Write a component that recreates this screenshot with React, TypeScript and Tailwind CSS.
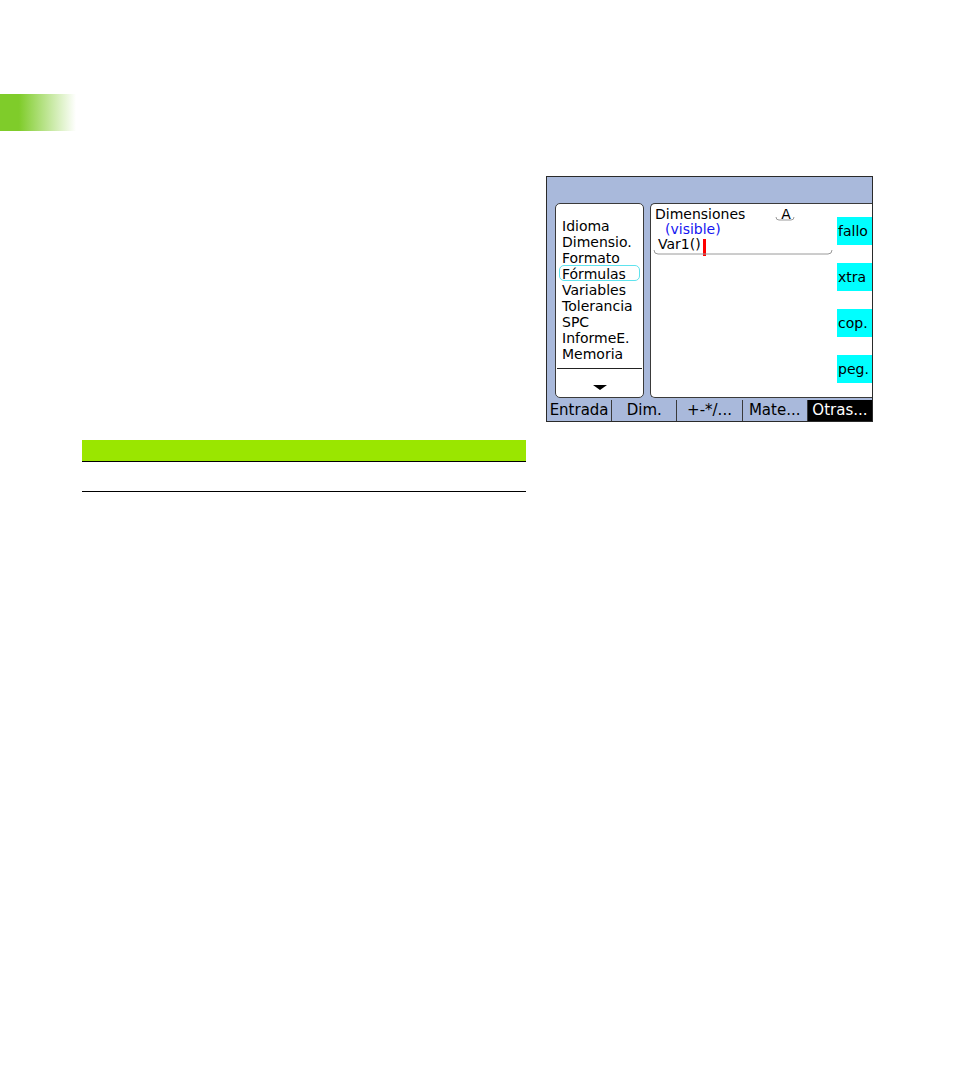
import React from "react";

const menuItems = [
  "Idioma",
  "Dimensio.",
  "Formato",
  "Fórmulas",
  "Variables",
  "Tolerancia",
  "SPC",
  "InformeE.",
  "Memoria",
];

const sideButtons = ["fallo", "xtra", "cop.", "peg."];

const tabs = ["Entrada", "Dim.", "+-*/...", "Mate...", "Otras..."];

function Screen() {
  return (
    <div
      className="w-[327px] h-[246px] border border-[#2a2a2a] bg-[#a9b9db] flex flex-col overflow-hidden"
      style={{ fontFamily: '"DejaVu Sans", "Liberation Sans", sans-serif' }}
    >
      {/* header strip */}
      <div className="h-[26px] shrink-0" />

      <div className="flex h-[195px] shrink-0">
        {/* left menu panel */}
        <div className="ml-[8px] w-[89px] h-full bg-white border border-[#3a3a3a] rounded-[5px] flex flex-col">
          <ul className="mt-[13px] px-[3px] text-[14px] text-black">
            {menuItems.map((item, i) => (
              <li
                key={item}
                className={`h-[16px] leading-[16px] px-[2px] rounded-[5px] border ${
                  i === 3 ? "border-[#5fe3ee]" : "border-transparent"
                }`}
              >
                {item}
              </li>
            ))}
          </ul>
          <div className="mx-[1px] mt-[7px] border-t border-[#222]" />
          <div className="flex justify-center mt-[16px]">
            <svg width="14" height="5" viewBox="0 0 14 5">
              <polygon points="0,0 14,0 7,5" fill="#000" />
            </svg>
          </div>
        </div>

        {/* right formula panel */}
        <div className="ml-[6px] flex-1 h-full bg-white border border-r-0 border-[#3a3a3a] rounded-l-[5px] flex">
          <div className="flex-1 pt-[3px] pl-[4px] text-[14px] leading-[15px] text-black">
            <div className="flex">
              <span>Dimensiones</span>
              <span className="relative ml-[36px]">
                A
                <svg
                  className="absolute left-[-6px] top-[10px]"
                  width="20"
                  height="5"
                  viewBox="0 0 20 5"
                >
                  <path d="M1 0 Q1 3 4 3 L16 3 Q19 3 19 0" fill="none" stroke="#9a9a9a" strokeWidth="1" />
                </svg>
              </span>
            </div>
            <div className="pl-[10px] text-[#1515f0]">(visible)</div>
            <div className="relative w-[178px] h-[17px]">
              <div className="pl-[3px] flex items-start">
                <span>Var1()</span>
                <span className="inline-block w-[3px] h-[17px] bg-[#ff0000] mt-[2px] ml-[2px]" />
              </div>
              <svg className="absolute left-[-2px] top-[13px]" width="180" height="6" viewBox="0 0 180 6">
                <path d="M1 0 Q1 4 5 4 L175 4 Q179 4 179 0" fill="none" stroke="#9a9a9a" strokeWidth="1" />
              </svg>
            </div>
          </div>
          <div className="w-[35px] pt-[13px] flex flex-col gap-[18px]">
            {sideButtons.map((b) => (
              <div
                key={b}
                className="h-[28px] bg-[#00ffff] text-[14px] leading-[28px] text-black pl-[1px]"
              >
                {b}
              </div>
            ))}
          </div>
        </div>
      </div>

      {/* bottom tab bar */}
      <div className="mt-[2px] h-[21px] flex text-[15px] leading-[21px]">
        {tabs.map((t, i) => (
          <div
            key={t}
            className={`flex-1 text-center ${
              i === tabs.length - 1
                ? "bg-black text-white"
                : "text-black border-r border-[#3a3a3a]"
            }`}
          >
            {t}
          </div>
        ))}
      </div>
    </div>
  );
}

export default function App() {
  return (
    <div className="w-[954px] h-[1090px] bg-white overflow-hidden">
      <div className="pt-[94px]">
        <div className="w-[76px] h-[37px] bg-[linear-gradient(to_right,#7fcc2a_25%,#ffffff_100%)]" />
      </div>

      <div className="flex mt-[45px]">
        <div className="ml-[82px] w-[444px] pt-[264px]">
          <div className="h-[22px] bg-[#9ae600] border-b border-black" />
          <div className="h-[30px] border-b border-black" />
        </div>
        <div className="ml-[20px]">
          <Screen />
        </div>
      </div>
    </div>
  );
}
